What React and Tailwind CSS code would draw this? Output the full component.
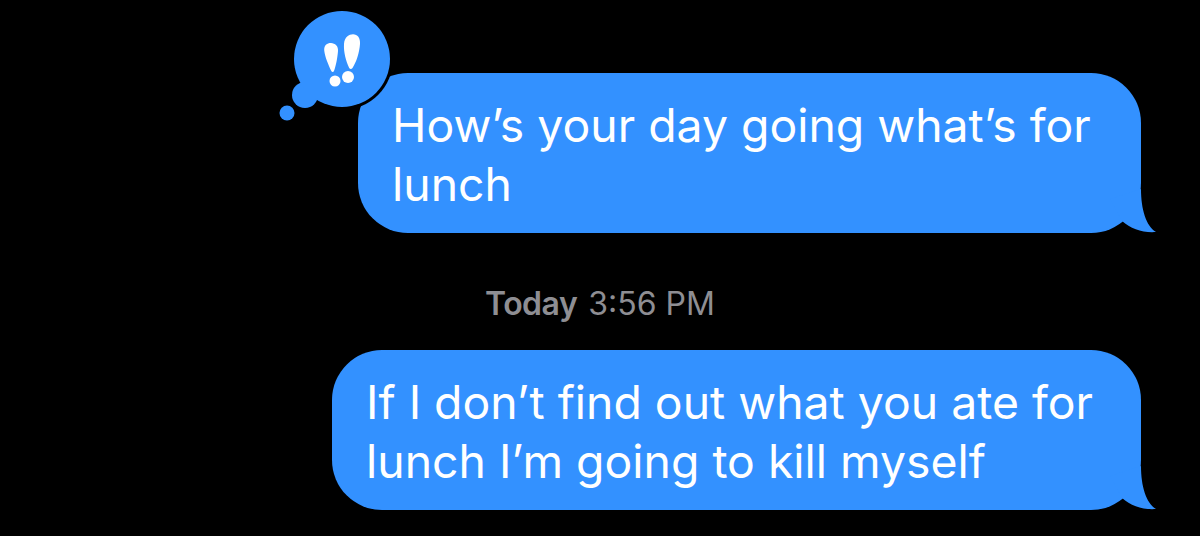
import React from 'react';

const BLUE = '#3391ff';

// bubble tail, sits on the bottom right corner
const Tail = () => (
  <svg className="absolute right-[-19px] bottom-[-2px]" width="60" height="46" viewBox="0 0 60 46">
    <path d="M41 0C41 20 46 37 56 43C43 44 31 40 22 32L10 10Z" fill={BLUE} />
  </svg>
);

const ThoughtBubble = () => (
  <svg className="absolute left-[-83px] top-[-68px]" width="120" height="120" viewBox="275 5 120 120">
    <circle cx="342" cy="59" r="51" fill="#000" />
    <circle cx="287" cy="113" r="7.5" fill={BLUE} />
    <circle cx="305" cy="95" r="13" fill={BLUE} />
    <circle cx="342" cy="59" r="48" fill={BLUE} />
    <path d="M324.3 51C323.5 44.500 328 42.800 331 43C335 43.200 338.500 46 338 51C337.500 57 336 66 334 71C333.400 72.400 332 72.400 331.300 71C328.500 65 325 57 324.300 51Z" fill="#fff" />
    <circle cx="335" cy="81" r="5.500" fill="#fff" />
    <path d="M344 44C344.500 37 349 34.300 353 34.300C357.500 34.300 360.500 38 360 44C359.500 52 356.500 62 352.500 68C351.500 69.300 350 69.300 349.200 68C346 61 343.500 52 344 44Z" fill="#fff" />
    <circle cx="348" cy="77" r="6" fill="#fff" />
  </svg>
);

const Bubble = ({ width, lines, children }) => (
  <div
    className={`relative h-[160px] rounded-[50px] bg-[#3391ff] pl-[34px] pt-[23px] text-[46.35px] leading-[59px] font-normal text-white ${width}`}
  >
    {children}
    {lines.map((line) => (
      <div key={line} className="whitespace-nowrap">{line}</div>
    ))}
    <Tail />
  </div>
);

export default function App() {
  return (
    <div
      className="flex h-[536px] w-[1200px] flex-col items-end overflow-hidden bg-black pr-[59px] pt-[73px]"
      style={{ fontFamily: 'Inter, "Liberation Sans", sans-serif' }}
    >
      <Bubble width="w-[783px]" lines={['How’s your day going what’s for', 'lunch']}>
        <ThoughtBubble />
      </Bubble>

      <div className="mt-[54px] h-[63px] w-full pl-[485px] text-[32px] leading-[34px] text-[#8e8e93]">
        <span className="mr-[2px] font-semibold tracking-[-0.5px]">Today</span> 3:56 PM
      </div>

      <Bubble width="w-[809px]" lines={['If I don’t find out what you ate for', 'lunch I’m going to kill myself']} />
    </div>
  );
}
